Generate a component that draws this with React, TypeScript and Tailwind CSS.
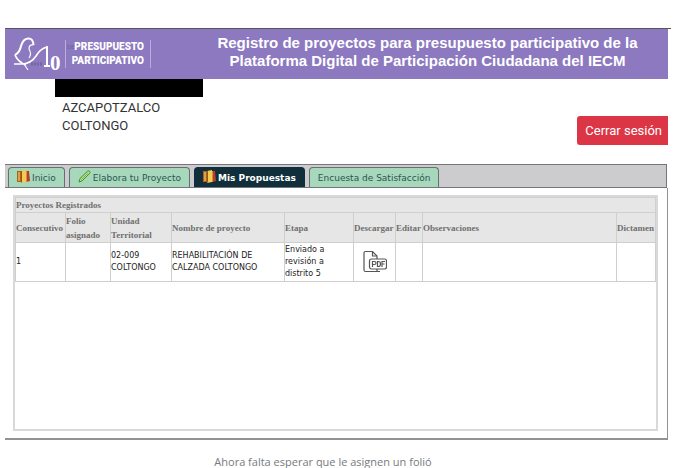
import React from 'react';

const tabs = [
  { label: 'Inicio', icon: 'books' },
  { label: 'Elabora tu Proyecto', icon: 'pencil' },
  { label: 'Mis Propuestas', icon: 'books', active: true },
  { label: 'Encuesta de Satisfacción' },
];

const columns = [
  { title: 'Consecutivo', width: 'w-[50px]' },
  { title: 'Folio asignado', width: 'w-[45px]' },
  { title: 'Unidad Territorial', width: 'w-[61px]' },
  { title: 'Nombre de proyecto', width: 'w-[113px]' },
  { title: 'Etapa', width: 'w-[69px]' },
  { title: 'Descargar', width: 'w-[42px]' },
  { title: 'Editar', width: 'w-[27px]' },
  { title: 'Observaciones', width: 'w-auto' },
  { title: 'Dictamen', width: 'w-[39px]' },
];

function BooksIcon() {
  return (
    <svg viewBox="0 0 13 13" className="-mt-1 h-[13px] w-[13px] shrink-0" aria-hidden="true">
      <path d="M0 1H4V12H0Z" fill="#a8641f" />
      <path d="M1 2H3V11H1Z" fill="#e0a040" />
      <path d="M4 1 9 0V12L4 13Z" fill="#f2cb55" />
      <path d="M4 1H5V13L4 12Z" fill="#8a5a1c" />
      <path d="M9 1H12L13 11 9 12Z" fill="#b5402a" />
      <path d="M9 1H10V12H9Z" fill="#e58a2c" />
    </svg>
  );
}

function PencilIcon() {
  return (
    <svg viewBox="0 0 13 13" className="-mt-1 h-[13px] w-[13px] shrink-0" aria-hidden="true">
      <path d="M1 12 2 8.500 9.500 1.200Q10.800.4 11.800 1.500 12.400 2.600 11.500 3.500L4.200 10.800Z" fill="#b4e08c" stroke="#3f8f2c" strokeWidth="1" />
      <path d="M3.200 9.700 10 3" stroke="#5da83e" strokeWidth=".7" />
    </svg>
  );
}

function PdfIcon() {
  return (
    <svg viewBox="0 0 24 24" className="h-6 w-6" fill="none" stroke="#555" strokeWidth="1.200" aria-hidden="true">
      <path d="M17 21.500H2.500Q1 21.500 1 20V3Q1 1.500 2.500 1.500H9.500L14 6V9" />
      <path d="M9.500 1.500V6H14M14 19V21.500" />
      <rect x="6.500" y="9" width="17" height="10" rx="2" fill="#fff" />
      <path d="M9.500 17V11.500H11.500Q13 11.500 13 13T11.500 14.500H9.500M14.500 11.500V16.500H15.500Q17.500 16.500 17.500 14T15.500 11.500ZM19 17V11.500H22M19 14H21.500" />
    </svg>
  );
}

function BirdLogo() {
  return (
    <svg viewBox="0 0 50 40" className="h-10 w-[50px] shrink-0" fill="none" stroke="#fff" role="img" aria-label="10">
      <path d="M2 21Q7 18 8 12Q10 5 15 4.500Q20 4 20.500 11" strokeWidth="2" />
      <path d="M20.500 11Q16 10 16 15Q19 20 16 24" strokeWidth="1.200" />
      <path d="M2 21Q5 28 13 31" strokeWidth="1.800" />
      <path d="M1 30H8Q18 30 23 22Q27 15 34 13" strokeWidth="1.600" />
      <path d="M11 30 15 36" strokeWidth="1.200" />
      <path d="M18 30H30" stroke="#7465a6" strokeWidth="3" strokeDasharray="2 1" />
      <path d="M34 12V32M31 32H37" strokeWidth="2" />
      <text x="37" y="36" fontFamily="Liberation Serif, serif" fontWeight="bold" fontSize="21" fill="#fff" stroke="none">0</text>
    </svg>
  );
}

export default function App() {
  return (
    <div className="bg-white font-['Liberation_Sans',Arial,sans-serif] text-[#333]">
      <header className="mr-1 ml-[5px] pt-7">
        <div className="border-t border-[#55555f]">
          <div className="mr-[3px] flex h-[50px] items-start bg-[#8c79bf] text-white">
            <div className="flex h-full w-[182px] shrink-0 items-center pl-2">
              <BirdLogo />
              <div className="ml-[2px] w-[86px] border-x border-[#b9addb] pr-[6px] font-[Roboto,sans-serif] text-[10px] leading-[14px] font-black whitespace-nowrap">
                <div className="flex items-center justify-end">
                  <span className="text-[6px] font-normal text-[#6f5f9c]">DE</span>
                  <span>PRESUPUESTO</span>
                </div>
                <div className="text-right">PARTICIPATIVO</div>
              </div>
            </div>
            <h1 className="flex-1 pt-[5px] text-center text-[15px] leading-[18px] font-bold">
              Registro de proyectos para presupuesto participativo de la<br />
              Plataforma Digital de Participación Ciudadana del IECM
            </h1>
          </div>
        </div>
      </header>

      <main className="mr-[7px] ml-[5px]">
        <section className="flex h-[85px] justify-between pl-[50px]">
          <div>
            <div className="h-[18px] w-[148px] bg-black" />
            <p className="pt-[2px] pl-[7px] font-[Roboto,sans-serif] text-[13px] leading-[18px]">
              AZCAPOTZALCO<br />COLTONGO
            </p>
          </div>
          <button className="mt-[37px] h-[29px] rounded-l-[3px] bg-[#dc3545] pr-[6px] pl-2 font-[Roboto,sans-serif] text-[13px] text-white">
            Cerrar sesión
          </button>
        </section>

        <nav className="mr-px flex h-6 items-end gap-1 border-y border-r border-[#77757c] bg-[#cccbce] pl-[3px] font-['DejaVu_Sans',Verdana,sans-serif] text-[9px]">
          {tabs.map((tab) => (
            <button
              key={tab.label}
              className={
                'flex h-5 items-center gap-[2px] rounded-t border border-b-0 px-2 pt-[2px] whitespace-nowrap ' +
                (tab.active
                  ? 'border-[#102f3b] bg-[#102f3b] font-bold text-white'
                  : 'border-[#66706f] bg-[#a7d8bc] text-[#2b5550]')
              }
            >
              {tab.icon === 'books' && <BooksIcon />}
              {tab.icon === 'pencil' && <PencilIcon />}
              {tab.label}
            </button>
          ))}
        </nav>

        <div className="border-r border-b-2 border-[#929296] pt-[7px] pr-[9px] pb-[7px] pl-2">
          <div className="min-h-[236px] border-2 border-[#d8d9d8]">
            <table className="w-full table-fixed border-collapse text-left">
              <colgroup>
                {columns.map((column) => (
                  <col key={column.title} className={column.width} />
                ))}
              </colgroup>
              <thead className="bg-[#e6e6e6] font-['Liberation_Serif',serif] text-[9px] leading-[14px] text-[#707070]">
                <tr>
                  <th colSpan={9} className="h-[15px] border border-[#cfcfcf] p-0">Proyectos Registrados</th>
                </tr>
                <tr>
                  {columns.map((column) => (
                    <th key={column.title} className="h-[30px] border border-[#cfcfcf] p-0">
                      {column.title}
                    </th>
                  ))}
                </tr>
              </thead>
              <tbody className="font-['DejaVu_Sans',Verdana,sans-serif] text-[8px] leading-[12px] text-[#222]">
                <tr>
                  <td className="h-[39px] border border-[#cfcfcf] p-0">1</td>
                  <td className="border border-[#cfcfcf] p-0" />
                  <td className="border border-[#cfcfcf] p-0">02-009<br />COLTONGO</td>
                  <td className="border border-[#cfcfcf] p-0">REHABILITACIÓN DE<br />CALZADA COLTONGO</td>
                  <td className="border border-[#cfcfcf] p-0">Enviado a<br />revisión a<br />distrito 5</td>
                  <td className="border border-[#cfcfcf] p-0">
                    <button aria-label="Descargar PDF" className="mx-auto block"><PdfIcon /></button>
                  </td>
                  <td className="border border-[#cfcfcf] p-0" />
                  <td className="border border-[#cfcfcf] p-0" />
                  <td className="border border-[#cfcfcf] p-0" />
                </tr>
              </tbody>
            </table>
          </div>
        </div>
      </main>

      <p className="pt-[15px] pr-[29px] text-center font-['Open_Sans',sans-serif] text-[11px] leading-[14px] text-[#777b7e]">
        Ahora falta esperar que le asignen un folió
      </p>
    </div>
  );
}
